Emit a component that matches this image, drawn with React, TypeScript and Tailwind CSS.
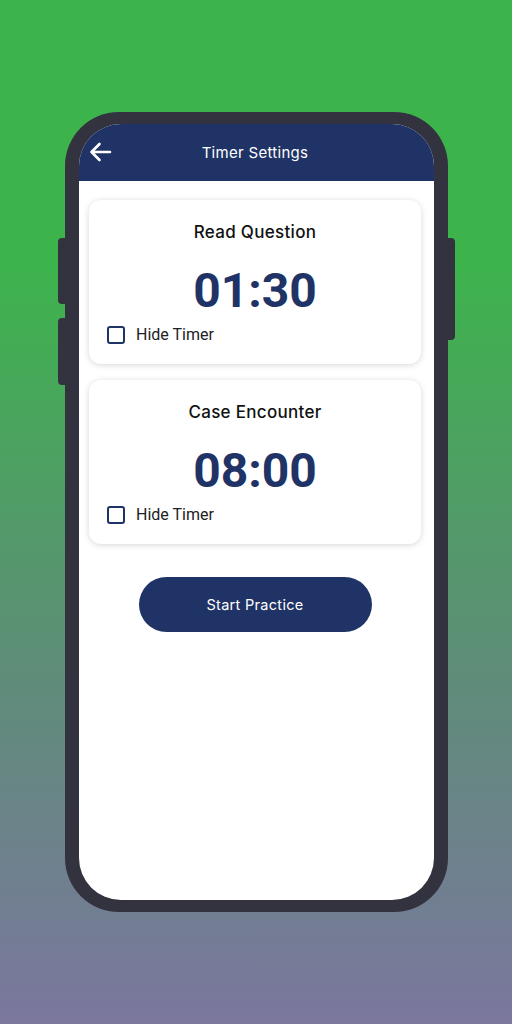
import React from "react";

function TimerCard({ title, time }: { title: string; time: string }) {
  return (
    <div className="ml-[10px] mr-[13px] flex h-[164px] flex-col rounded-[12px] bg-white shadow-[0_1px_6px_rgba(0,0,0,0.16)]">
      <div className="pt-[20px] text-center text-[17px] font-medium leading-[24px] tracking-[0.3px] text-[#111] [font-family:Inter,'Noto_Sans',sans-serif]">
        {title}
      </div>
      <div className="mt-[22px] text-center text-[48px] font-bold leading-[50px] text-[#1f3366] [font-family:Roboto,sans-serif]">
        {time}
      </div>
      <div className="mt-[9px] flex h-[20px] items-center gap-[11px] pl-[18px]">
        <div className="h-[18px] w-[18px] rounded-[3px] border-2 border-[#1f3366]" />
        <span className="text-[16px] leading-[20px] text-[#222] [font-family:Roboto,sans-serif]">Hide Timer</span>
      </div>
    </div>
  );
}

export default function App() {
  return (
    <div className="relative h-[1024px] w-[512px] overflow-hidden bg-[linear-gradient(to_bottom,#3cb44b_0%,#3cb44b_25%,#5e8d78_65%,#7b779e_100%)] pl-[65px] pt-[112px]">
      <div className="relative h-[800px] w-[383px] rounded-[54px] bg-[#33323f] px-[14px] pb-[12px] pt-[12px]">
        <div className="absolute left-[-7px] top-[126px] h-[66px] w-[8px] rounded-l-[4px] bg-[#33323f]" />
        <div className="absolute left-[-7px] top-[206px] h-[67px] w-[8px] rounded-l-[4px] bg-[#33323f]" />
        <div className="absolute right-[-7px] top-[126px] h-[102px] w-[8px] rounded-r-[4px] bg-[#33323f]" />
        <div className="flex h-full w-full flex-col overflow-hidden rounded-[42px] bg-white">
          <div className="relative flex h-[57px] items-center justify-center bg-[#1f3366] pr-[3px]">
            <svg
              className="absolute left-[10px] top-[18px]"
              width="23"
              height="20"
              viewBox="0 0 23 20"
              fill="none"
              stroke="white"
              strokeWidth="2.6"
              strokeLinecap="round"
              strokeLinejoin="round"
            >
              <path d="M21 10H2.5M10.5 2L2.5 10L10.5 18" />
            </svg>
            <span className="text-[15px] leading-[20px] tracking-[0.3px] text-white [font-family:Inter,'Noto_Sans',sans-serif]">Timer Settings</span>
          </div>
          <div className="flex flex-col gap-[16px] pt-[19px]">
            <TimerCard title="Read Question" time="01:30" />
            <TimerCard title="Case Encounter" time="08:00" />
          </div>
          <div className="flex justify-center pr-[3px] pt-[33px]">
            <button className="flex h-[55px] w-[233px] items-center justify-center rounded-full bg-[#1f3366] text-[14.5px] tracking-[0.3px] text-white [font-family:Inter,'Noto_Sans',sans-serif]">
              Start Practice
            </button>
          </div>
        </div>
      </div>
    </div>
  );
}
